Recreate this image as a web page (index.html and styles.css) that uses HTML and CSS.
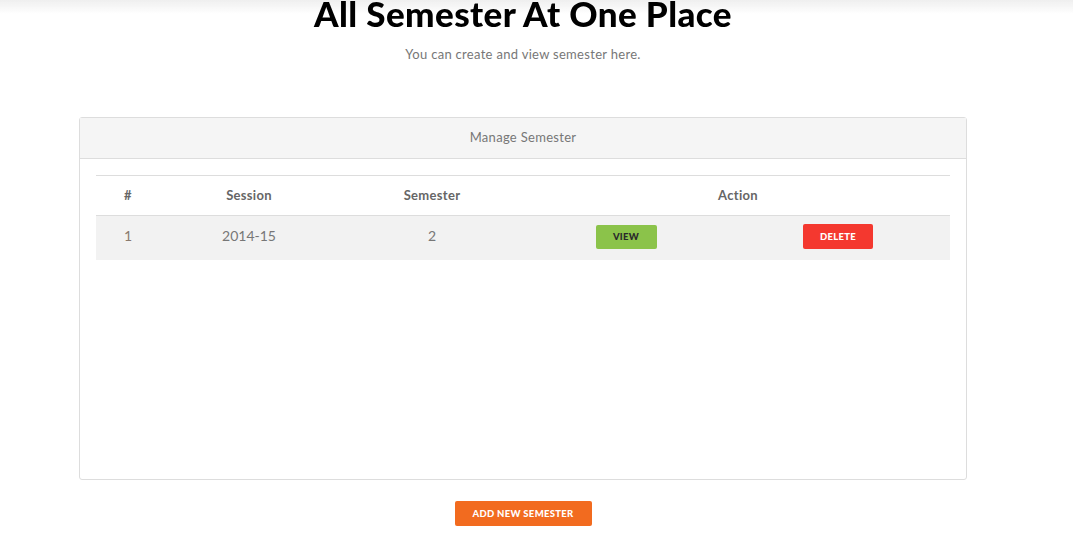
FILE: index.html
```html
<!DOCTYPE html>
<html>
<head>
<meta charset="utf-8">
<link rel="stylesheet" href="styles.css">
</head>
<body>
<div class="topshade"></div>
<div class="wrap">
  <h1 class="title">All Semester At One Place</h1>
  <p class="subtitle">You can create and view semester here.</p>
  <div class="card">
    <div class="card-head">Manage Semester</div>
    <div class="card-body">
      <table class="tbl">
        <colgroup>
          <col class="c1"><col class="c2"><col class="c3"><col class="c4"><col class="c5">
        </colgroup>
        <thead>
          <tr>
            <th>#</th>
            <th>Session</th>
            <th>Semester</th>
            <th colspan="2">Action</th>
          </tr>
        </thead>
        <tbody>
          <tr>
            <td class="num">1</td>
            <td>2014-15</td>
            <td>2</td>
            <td class="bcell"><span class="btn btn-view">VIEW</span></td>
            <td class="bcell"><span class="btn btn-del">DELETE</span></td>
          </tr>
        </tbody>
      </table>
    </div>
  </div>
  <div class="actions"><span class="btn btn-add">ADD NEW SEMESTER</span></div>
</div>
</body>
</html>
```
FILE: styles.css
```css
html, body {
  margin: 0;
  padding: 0;
  background: #fff;
}
body {
  font-family: Lato, "Noto Sans", sans-serif;
  color: #777;
}
.topshade {
  position: fixed;
  top: 0;
  left: 0;
  right: 0;
  height: 14px;
  background: linear-gradient(#efefef, rgba(255,255,255,0));
  pointer-events: none;
}
.wrap {
  width: 1046px;
}
.title {
  margin: -7px 0 0 0;
  text-align: center;
  font-size: 35px;
  line-height: 40px;
  font-weight: 900;
  color: #000;
  letter-spacing: 0.4px;
  position: relative;
}
.subtitle {
  margin: 12px 0 0 0;
  text-align: center;
  font-size: 13px;
  line-height: 18px;
  letter-spacing: 0.3px;
  color: #777;
}
.card {
  margin: 54px 79px 0 79px;
  border: 1px solid #ddd;
  border-radius: 3px;
  height: 363px;
  box-sizing: border-box;
}
.card-head {
  background: #f5f5f5;
  border-bottom: 1px solid #ddd;
  height: 41px;
  box-sizing: border-box;
  text-align: center;
  font-size: 13px;
  line-height: 39px;
  letter-spacing: 0.3px;
  color: #777;
}
.card-body {
  padding: 16px 16px;
}
.tbl {
  width: 854px;
  border-collapse: collapse;
  table-layout: fixed;
}
.tbl th, .tbl td {
  text-align: center;
  padding: 0;
}
.tbl thead tr {
  border-top: 1px solid #ddd;
  border-bottom: 1px solid #ddd;
  height: 40px;
}
.tbl th {
  font-size: 13px;
  font-weight: 700;
  letter-spacing: 0.3px;
  color: #666;
  padding-bottom: 1px;
}
.tbl tbody tr {
  background: #f2f2f2;
  height: 44px;
}
.tbl td {
  font-size: 14px;
  color: #777;
  vertical-align: middle;
  padding-bottom: 5px;
}
.tbl td.bcell {
  padding-bottom: 2px;
}
.tbl td.num { color: #8a7a6e; }
.c1 { width: 64px; }
.c2 { width: 178px; }
.c3 { width: 188px; }
.c4 { width: 200px; }
.c5 { width: 224px; }
.btn {
  display: inline-block;
  font-size: 9.5px;
  font-weight: 900;
  border-radius: 2px;
  text-align: center;
  letter-spacing: 0.3px;
  vertical-align: middle;
}
.btn-view {
  background: #8bc34a;
  color: #2a2a2a;
  width: 61px;
  height: 24px;
  line-height: 24px;
}
.btn-del {
  background: #f4382f;
  color: #fff;
  width: 70px;
  height: 25px;
  line-height: 25px;
}
.actions {
  margin-top: 21px;
  text-align: center;
}
.btn-add {
  background: #f26b1f;
  color: #fff;
  width: 137px;
  height: 25px;
  line-height: 26px;
}
```
